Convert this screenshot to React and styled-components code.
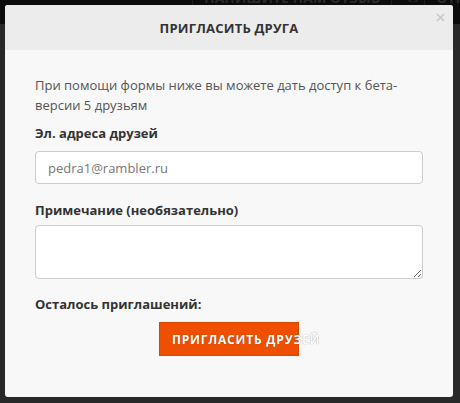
import styled, { createGlobalStyle } from 'styled-components';
import { useState } from 'react';

const Global = createGlobalStyle`
    html, body {
        margin: 0;
        padding: 0;
        background: #282828;
        font-family: "Open Sans", "Noto Sans", sans-serif;
    }
    * { box-sizing: border-box; }
`

export default function App(){
    const [emails, setEmails] = useState('');
    const [note, setNote] = useState('');

    return (
        <Page>
            <Global />
            <TopBar>
                <TopItem>НАПИШИТЕ НАМ ОТЗЫВ</TopItem>
                <TopIcon>✉</TopIcon>
                <TopItem>ОТПРАВИТЬ</TopItem>
            </TopBar>
            <Backdrop>
                <Modal>
                    <Header>
                        <Title>ПРИГЛАСИТЬ ДРУГА</Title>
                        <Close aria-label="close">
                            <svg width="9" height="9" viewBox="0 0 9 9">
                                <path d="M1 1L8 8M8 1L1 8" stroke="#c4c4c4" strokeWidth="1.3" />
                            </svg>
                        </Close>
                    </Header>
                    <Body>
                        <Intro>При помощи формы ниже вы можете дать доступ к бета-версии 5 друзьям</Intro>
                        <Field $gap={9}>
                            <Label>Эл. адреса друзей</Label>
                            <Input type="text" placeholder="pedra1@rambler.ru" value={emails} onChange={(e) => setEmails(e.target.value)} />
                        </Field>
                        <Field $gap={6} $bottom={16} $top={-1}>
                            <Label>Примечание (необязательно)</Label>
                            <TextArea value={note} onChange={(e) => setNote(e.target.value)} />
                        </Field>
                        <Label>Осталось приглашений:</Label>
                        <Actions>
                            <InviteButton href="#" onClick={(e) => e.preventDefault()}>ПРИГЛАСИТЬ ДРУЗЕЙ</InviteButton>
                        </Actions>
                    </Body>
                </Modal>
            </Backdrop>
        </Page>
    )
}

const Page = styled.div`
    position: relative;
    width: 460px;
    height: 403px;
    overflow: hidden;
    background: #282828;
`

const TopBar = styled.div`
    height: 24px;
    background: #0c0c0c;
    display: flex;
    align-items: flex-start;
    padding-left: 192px;
    overflow: hidden;
`

const TopItem = styled.div`
    font-size: 14px;
    font-weight: 700;
    line-height: 14px;
    margin-top: -9px;
    color: #2a2a2a;
    padding: 0 11px;
    border-left: 1px solid #1e1e1e;
    white-space: nowrap;
`

const TopIcon = styled.div`
    color: #2a2a2a;
    font-size: 12px;
    line-height: 12px;
    margin-top: -7px;
    padding: 0 6px 0 16px;
    border-left: 1px solid #1e1e1e;
`

const Backdrop = styled.div`
    position: absolute;
    inset: 0;
    padding: 5px 7px 6px 5px;
`

const Modal = styled.div`
    width: 448px;
    height: 392px;
    background: #f8f8f8;
    border-radius: 3px;
    overflow: hidden;
    display: flex;
    flex-direction: column;
`

const Header = styled.div`
    position: relative;
    height: 45px;
    background: #ececec;
    display: flex;
    align-items: center;
    justify-content: center;
`

const Title = styled.h3`
    margin: 0;
    font-size: 13px;
    font-weight: 700;
    color: #333;
    letter-spacing: 0.2px;
`

const Close = styled.span`
    position: absolute;
    top: 8px;
    right: 8px;
    display: flex;
`

const Body = styled.div`
    padding: 25px 30px 0 30px;
    display: flex;
    flex-direction: column;
`

const Intro = styled.p`
    margin: 0 0 9px 0;
    font-size: 13px;
    line-height: 20px;
    color: #555;
`

const Field = styled.div`
    display: flex;
    flex-direction: column;
    gap: ${p => p.$gap}px;
    margin-top: ${p => p.$top ?? 0}px;
    margin-bottom: ${p => p.$bottom ?? 18}px;
`

const Label = styled.label`
    font-size: 13px;
    font-weight: 700;
    color: #333;
    line-height: 18px;
`

const Input = styled.input`
    width: 388px;
    height: 33px;
    border: 1px solid #ccc;
    border-radius: 4px;
    background: #fff;
    padding: 0 12px;
    font-family: inherit;
    font-size: 13px;
    color: #555;
    outline: none;
    &::placeholder { color: #777; }
`

const TextArea = styled.textarea`
    width: 388px;
    height: 54px;
    border: 1px solid #ccc;
    border-radius: 4px;
    background: #fff;
    padding: 6px 12px;
    font-family: inherit;
    font-size: 13px;
    outline: none;
`

const Actions = styled.div`
    display: flex;
    justify-content: center;
    margin-top: 9px;
`

const InviteButton = styled.a`
    display: flex;
    align-items: center;
    width: 140px;
    height: 34px;
    background: #ef5000;
    border: 1px solid #d94800;
    color: #fff;
    font-size: 12px;
    font-weight: 700;
    letter-spacing: 0.8px;
    padding: 0 0 0 12px;
    white-space: nowrap;
    text-decoration: none;
    text-shadow: 0 0 1px rgba(0, 0, 0, 0.45);
    overflow: visible;
    cursor: pointer;
`
